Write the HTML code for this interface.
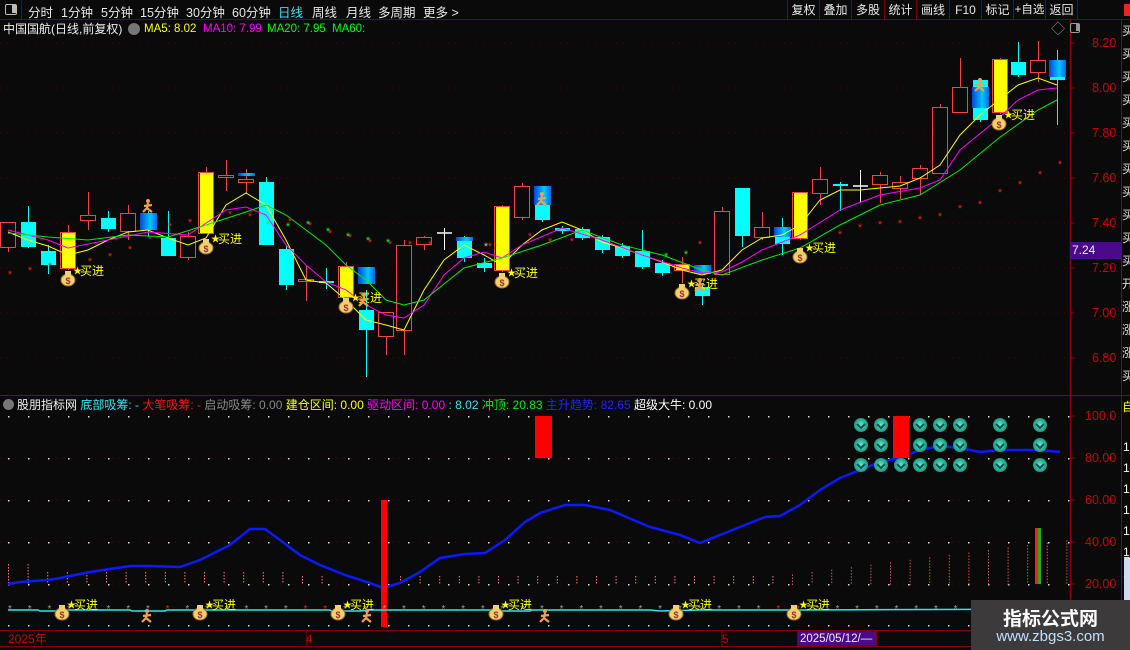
<!DOCTYPE html>
<html><head><meta charset="utf-8">
<style>
*{margin:0;padding:0;box-sizing:border-box}
body{width:1130px;height:650px;background:#0a0a0a;overflow:hidden;font-family:"Liberation Sans","Noto Sans CJK SC",sans-serif;position:relative;color:#ddd}
.t{position:absolute;white-space:nowrap;font-size:12px;line-height:14px}
#top{position:absolute;left:0;top:0;width:1130px;height:20px;border-bottom:1px solid #7a0000}
.tb{position:absolute;top:2px;font-size:12.5px;color:#e8e8e8;white-space:nowrap}
.rb{position:absolute;top:0;height:20px;border-left:1px solid #7a0000;font-size:12px;color:#e8e8e8;text-align:center;line-height:20px;white-space:nowrap;overflow:hidden}
</style></head><body>
<div id="top">
<div style="position:absolute;left:0;top:0;width:22px;height:20px;border-right:1px solid #7a0000"><div style="position:absolute;left:5px;top:4px;width:12px;height:11px;border:1.5px solid #bbb;border-radius:2px"><div style="position:absolute;right:0;top:0;width:4px;height:8px;background:#bbb"></div></div></div>
<span class="tb" style="left:28px">分时</span>
<span class="tb" style="left:61px">1分钟</span>
<span class="tb" style="left:101px">5分钟</span>
<span class="tb" style="left:140px">15分钟</span>
<span class="tb" style="left:186px">30分钟</span>
<span class="tb" style="left:232px">60分钟</span>
<span class="tb" style="left:278px;color:#2ee6f0">日线</span>
<span class="tb" style="left:312px">周线</span>
<span class="tb" style="left:346px">月线</span>
<span class="tb" style="left:378px">多周期</span>
<span class="tb" style="left:423px">更多 &gt;</span>
<div class="rb" style="left:787px;width:32px">复权</div>
<div class="rb" style="left:819px;width:32px">叠加</div>
<div class="rb" style="left:851px;width:33px">多股</div>
<div class="rb" style="left:884px;width:32px">统计</div>
<div class="rb" style="left:916px;width:33px">画线</div>
<div class="rb" style="left:949px;width:32px">F10</div>
<div class="rb" style="left:981px;width:32px">标记</div>
<div class="rb" style="left:1013px;width:32px;font-size:11.5px">+自选</div>
<div class="rb" style="left:1045px;width:33px;border-right:1px solid #7a0000">返回</div>
<div style="position:absolute;left:1124px;top:4px;width:6px;height:12px;background:#e22"></div>
</div>
<svg id="s" width="1130" height="650" style="position:absolute;left:0;top:0"></svg>
<div class="t" style="left:3px;top:22px;color:#eee">中国国航(日线,前复权)</div>
<div style="position:absolute;left:128px;top:23px;width:12px;height:12px;border-radius:6px;background:#777"></div>
<div class="t" style="left:144px;top:22px;color:#ff0;font-size:11.5px">MA5: 8.02</div>
<div class="t" style="left:203px;top:22px;color:#f0f;font-size:11.5px">MA10: 7.99</div>
<div class="t" style="left:267px;top:22px;color:#0f0;font-size:11.5px">MA20: 7.95</div>
<div class="t" style="left:332px;top:22px;color:#0f0;font-size:11.5px">MA60:</div>
<div class="t" style="left:1051px;top:22px;color:#888;font-size:14px">◇</div>
<div style="position:absolute;left:1070px;top:23px;width:10px;height:10px;border:1.5px solid #999;border-radius:2px"><div style="position:absolute;right:0;top:0;width:3px;height:7px;background:#999"></div></div>
<div style="position:absolute;left:3px;top:399px;width:11px;height:11px;border-radius:6px;background:#777"></div>
<div class="t" style="left:17px;top:398px;color:#eee">股朋指标网 <span style="color:#2ee6f0">底部吸筹: -</span> <span style="color:#f11">大笔吸筹: -</span> <span style="color:#888">启动吸筹: 0.00</span> <span style="color:#ff0">建仓区间: 0.00</span> <span style="color:#f0f">驱动区间: 0.00</span> <span style="color:#2ee6f0">: 8.02</span> <span style="color:#0e0">冲顶: 20.83</span> <span style="color:#22f">主升趋势: 82.65</span> <span style="color:#fff">超级大牛: 0.00</span></div>
<div id="lbl"></div>
<div style="position:absolute;left:1070px;top:242px;width:51px;height:17px;background:#4a0a8a;color:#eee;font-size:12px;line-height:17px;padding-left:2px">7.24</div>
<div class="t" style="left:8px;top:632px;color:#c00">2025年</div>
<div class="t" style="left:306px;top:632px;color:#c00">4</div>
<div class="t" style="left:722px;top:632px;color:#c00">5</div>
<div style="position:absolute;left:797px;top:631px;width:80px;height:15px;background:#4a0a8a;color:#eee;font-size:11.5px;line-height:15px;padding-left:2px;border:1px solid #7a0000">2025/05/12/—</div>
<div style="position:absolute;left:971px;top:600px;width:159px;height:50px;background:#3c3a3a">
<div style="position:absolute;left:0;top:4px;width:159px;text-align:center;color:#fff;font-weight:bold;font-size:19px">指标公式网</div>
<div style="position:absolute;left:0;top:28px;width:159px;text-align:center;color:#bfe0ff;font-size:15px">www.zbgs3.com</div></div>
<script>
var s=document.getElementById('s'),h='';
function R(x,y,w,hh,c,e){h+='<rect x="'+x+'" y="'+y+'" width="'+w+'" height="'+hh+'" fill="'+c+'" '+(e||'')+'/>'}
function L(x1,y1,x2,y2,c,e){h+='<line x1="'+x1+'" y1="'+y1+'" x2="'+x2+'" y2="'+y2+'" stroke="'+c+'" '+(e||'')+'/>'}
h+='<defs><linearGradient id="bg"><stop offset="0" stop-color="#0044dd"/><stop offset=".6" stop-color="#00c8ff"/><stop offset="1" stop-color="#0066ee"/></linearGradient><radialGradient id="gc"><stop offset="0" stop-color="#6fe8c8"/><stop offset="1" stop-color="#139a80"/></radialGradient></defs>';
[43,88,133,178,223,268,313,358].forEach(function(y){L(0,y,1068,y,'#5a0000','stroke-dasharray="1 6"')});
[458,500,542,584].forEach(function(y){L(0,y,1068,y,'#5a0000','stroke-dasharray="1 6"')});
L(1070.5,20,1070.5,650,'#8a0000','stroke-width="1.5"');L(1121.5,20,1121.5,650,'#8a0000');
L(0,395.5,1130,395.5,'#8a0000');L(0,630.5,1130,630.5,'#8a0000');L(0,646.5,1130,646.5,'#8a0000');
[307,722].forEach(function(x){L(x,630,x,646,'#8a0000')});
var lb='';
['8.20','8.00','7.80','7.60','7.40','7.20','7.00','6.80'].forEach(function(t,i){lb+='<div class="t" style="left:1092px;top:'+(36+45*i)+'px;color:#c00;font-size:12.5px">'+t+'</div>';L(1070,43+45*i,1075,43+45*i,'#8a0000')});
['100.0','80.00','60.00','40.00','20.00'].forEach(function(t,i){lb+='<div class="t" style="left:1085px;top:'+(409+42*i)+'px;color:#c00;font-size:12.5px">'+t+'</div>';L(1070,416+42*i,1075,416+42*i,'#8a0000')});
var vc='买买买买买买买买买买买开涨涨涨买卖卖卖卖买买卖';
for(var i=0;i<16;i++)lb+='<div class="t" style="left:1122px;top:'+(24+i*23)+'px;color:#ddd;font-size:12px;width:8px;overflow:hidden">'+vc[i]+'</div>';
lb+='<div style="position:absolute;left:1122px;top:398px;width:8px;height:16px;color:#ff0;font-size:12px;overflow:hidden">自</div>';
for(i=0;i<7;i++)lb+='<div class="t" style="left:1123px;top:'+(440+i*21)+'px;color:#fff;font-size:12px;width:7px;overflow:hidden">1</div>';
lb+='<div style="position:absolute;left:1124px;top:557px;width:6px;height:45px;background:#cde"></div>';
document.getElementById('lbl').innerHTML=lb;
var C=[[8,222,247,222,252,'r'],[28,222,247,206,248,'c'],[48,251,265,245,274,'c'],[68,233,268,225,270,'y'],[88,215,220,192,230,'r'],[108,218,229,211,232,'c'],[128,213,231,205,240,'r'],[148,213,230,211,237,'b'],[168,238,256,211,256,'c'],[188,236,257,232,260,'r'],[206,173,233,167,233,'y'],[226,175,177,160,191,'r'],[246,179,182,169,193,'r'],[266,182,245,177,245,'c'],[286,249,285,245,290,'c'],[306,279,281,266,301,'r'],[326,281,283,268,289,'c'],[346,267,297,262,300,'y'],[366,310,330,290,377,'c'],[386,312,336,312,355,'r'],[404,245,330,240,355,'r'],[424,237,244,236,250,'r'],[444,233,234,228,250,'w'],[464,240,258,236,262,'c'],[484,263,268,258,272,'c'],[502,207,270,205,272,'y'],[522,186,217,183,220,'r'],[542,205,220,186,222,'c'],[562,228,231,226,234,'c'],[582,229,238,227,240,'c'],[602,237,250,235,253,'c'],[622,246,256,243,258,'c'],[642,251,267,230,269,'c'],[662,263,273,260,276,'c'],[682,265,270,257,283,'y'],[702,287,296,285,305,'c'],[722,211,274,207,274,'r'],[742,188,236,188,247,'c'],[762,227,237,212,240,'r'],[782,237,244,218,255,'c'],[800,193,238,192,240,'y'],[820,179,193,167,205,'r'],[840,184,186,182,211,'c'],[860,186,187,170,202,'w'],[880,175,184,172,203,'r'],[900,182,188,176,199,'r'],[920,168,178,165,195,'r'],[940,107,173,104,174,'r'],[960,87,112,58,113,'r'],[980,80,120,78,122,'c'],[1000,60,112,58,114,'y'],[1018,62,75,42,77,'c'],[1038,60,72,41,82,'r'],[1057,60,80,50,125,'c']];
var col={r:'#f04545',c:'#00ffff',y:'#ffff00',w:'#ffffff',b:'#00ffff'};
C.forEach(function(c){var x=c[0],cl=col[c[5]];
 L(x+.5,c[3],x+.5,c[4],c[5]=='y'?'#f04545':cl);
 if(c[5]=='r')R(x-7.5,c[1]+.5,15,Math.max(1,c[2]-c[1]),'#0a0a0a','stroke="#f04545"');
 else if(c[5]=='w')L(x-7,c[1],x+8,c[1],'#fff','stroke-width="1.5"');
 else if(c[5]=='y'){R(x-7.5,c[1]-.5,15,c[2]-c[1]+1,'none','stroke="#f04545"');R(x-6,c[1],13,c[2]-c[1],'#ff0')}
 else R(x-7,c[1],15,Math.max(2,c[2]-c[1]),cl);});
[[148,213,17],[246,173,3],[366,267,17],[464,237,4],[542,186,19],[702,265,9],[782,227,10],[980,87,21],[1057,60,17]].forEach(function(b){R(b[0]-8,b[1],17,b[2],'url(#bg)')});
function P(pts,c,w){h+='<polyline fill="none" stroke="'+c+'" stroke-width="'+(w||1)+'" points="'+pts+'"/>'}
P('8,232 28,240 48,246 68,255 88,250 108,240 128,232 148,230 168,238 188,245 206,238 226,205 246,193 266,205 286,240 306,280 326,283 346,300 366,320 386,325 404,330 424,290 444,260 464,245 484,255 502,265 522,245 542,230 562,222 582,230 602,242 622,248 642,255 662,262 682,270 702,275 722,270 742,250 762,238 782,235 800,225 820,200 840,190 860,190 880,188 900,186 920,178 940,165 960,135 980,115 999,100 1018,85 1038,78 1057,85','#ff0');
P('8,230 48,240 68,248 108,240 148,232 188,235 226,210 246,207 266,215 286,245 306,265 326,282 346,290 366,305 386,315 404,318 424,305 444,275 464,258 484,252 502,258 522,245 562,228 602,240 642,255 682,268 702,273 722,272 742,262 762,250 800,235 840,210 880,195 920,188 940,180 960,150 999,118 1018,100 1038,90 1057,88','#f0f');
P('8,233 48,237 88,240 128,235 168,237 206,225 246,212 266,205 286,215 326,245 346,265 366,280 386,300 404,305 424,300 464,268 502,258 542,245 582,230 622,245 662,255 702,270 722,275 762,260 800,248 840,225 880,205 920,195 960,170 999,138 1038,110 1057,100','#0e0');
function st(x,y,c,sz){h+='<text x="'+x+'" y="'+y+'" fill="'+c+'" font-size="'+(sz||11)+'" font-family="Liberation Sans" text-anchor="middle">*</text>'}
[[10,278],[30,274],[50,270],[90,265],[110,260],[130,253],[150,243],[170,230],[190,226],[230,218],[250,220],[290,225],[310,229],[330,237],[350,241],[370,246],[390,248],[410,248],[430,248],[490,250],[530,240],[550,245],[572,245],[700,248],[840,238],[860,231],[880,228],[900,227],[920,223],[940,220],[960,212],[980,208],[1000,196],[1020,188],[1040,178],[1060,168]].forEach(function(p){st(p[0],p[1],'#e22')});
[[268,228],[288,230],[308,228],[328,235],[348,240],[368,244],[388,246],[666,260],[686,258]].forEach(function(p){st(p[0],p[1],'#2e2')});
st(486,250,'#bbb');
function bag(x,y){h+='<ellipse cx="'+x+'" cy="'+y+'" rx="7" ry="6" fill="#f0d070" stroke="#a07020"/><rect x="'+(x-3)+'" y="'+(y-9)+'" width="6" height="4" fill="#f0d070"/><text x="'+x+'" y="'+(y+4)+'" fill="#a03030" font-size="9" font-weight="bold" text-anchor="middle" font-family="Liberation Sans">$</text>'}
function buy(x,y){bag(x,y+10);h+='<text x="'+(x+5)+'" y="'+(y+4)+'" fill="#ff0" font-size="9">★</text><text x="'+(x+12)+'" y="'+(y+5)+'" fill="#ff0" font-size="12" font-family="Noto Sans CJK SC">买进</text>'}
function man(x,y){h+='<circle cx="'+x+'" cy="'+(y-6)+'" r="2" fill="#f0a050"/><path d="M'+x+' '+(y-4)+'L'+(x-1)+' '+(y+1)+'L'+(x-5)+' '+(y+5)+'M'+(x-1)+' '+(y+1)+'L'+(x+4)+' '+(y+5)+'M'+(x-4)+' '+(y-1)+'L'+(x+4)+' '+(y-2)+'" stroke="#f0a050" stroke-width="2.2" fill="none"/>'}
buy(68,270);buy(206,238);buy(346,297);buy(502,272);buy(682,283);buy(800,247);buy(999,114);
man(148,207);man(542,200);man(700,286);man(980,86);man(364,301);
for(var x=8;x<1070;x+=20){[416,458,500,542,584,625].forEach(function(y){R(x,y,1.5,1.5,'#ddd')})}
for(x=8;x<1070;x+=19.6){var hh=x<300?(x<30?20:12):(x>780?(x-780)/8+8:8);if(x>330&&x<400)continue;for(var yy=584-hh;yy<584;yy+=3)R(x,yy,1,1.5,x>780?'#c55':'#f77')}
R(1035,528,3,56,'#e22');R(1038,528,3,56,'#2a2');
P('8,584 20,582 48,580 60,578 90,572 130,566 150,566 180,567 200,560 230,545 250,529 265,529 280,540 300,555 320,565 345,575 370,583 383,588 400,583 420,572 440,558 465,554 485,553 505,540 525,522 540,513 565,505 585,505 610,510 650,527 680,535 700,543 720,535 740,527 765,517 780,516 800,505 820,490 840,478 860,470 880,462 900,458 920,450 940,446 960,448 980,452 1000,450 1020,450 1040,450 1060,452','#0a1aff',2.5);
R(381,500,6,127,'#f00');R(535,416,17,42,'#f00');R(893,416,16,42,'#f00');
function gc(x,y){h+='<circle cx="'+x+'" cy="'+y+'" r="7" fill="url(#gc)"/><path d="M'+(x-4)+' '+(y-1)+'L'+x+' '+(y+3)+'L'+(x+4)+' '+(y-1)+'" stroke="#155" stroke-width="2" fill="none"/>'}
[861,881,920,940,960,1000,1040].forEach(function(x){gc(x,425);gc(x,445)});
[861,881,901,920,940,960,1000,1040].forEach(function(x){gc(x,465)});
P('8,610 38,610 40,611 60,611 62,610 130,610 132,611 165,611 167,610 230,610 250,610 260,610 270,610 330,610 332,611 360,611 370,610 500,610 502,611 530,611 532,610 650,610 660,611 700,610 760,610 780,610 800,610 1070,609','#2ee6f0',1.5);
for(x=10;x<970;x+=19.7)st(x,612,(x>150&&x<170)||(x>300&&x<330)||(x>760&&x<800)?'#e22':'#999',10);
buy(62,604);buy(200,604);buy(338,604);buy(496,604);buy(676,604);buy(794,604);
man(147,617);man(367,617);man(545,617);
s.innerHTML=h;
</script>
</body></html>
